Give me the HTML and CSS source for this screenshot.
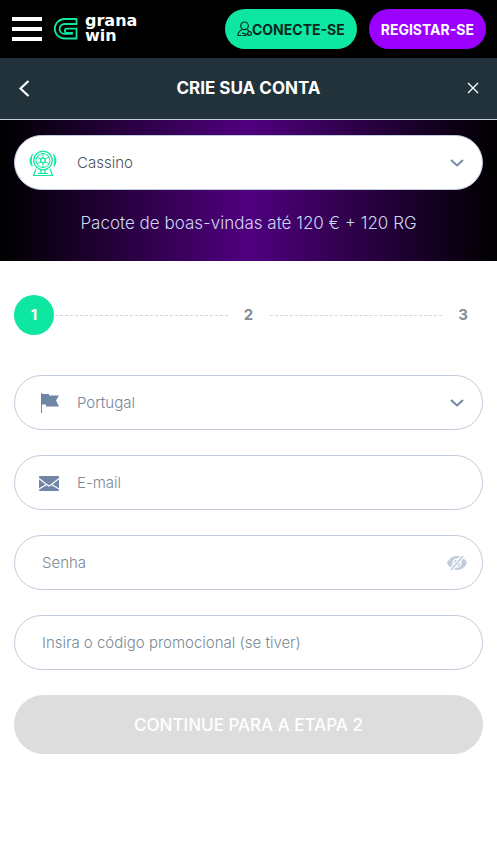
FILE: index.html
```html
<!DOCTYPE html>
<html lang="pt">
<head>
<meta charset="utf-8">
<meta name="viewport" content="width=device-width, initial-scale=1">
<title>Crie sua conta</title>
<link rel="stylesheet" href="styles.css">
</head>
<body>
<header class="topbar">
  <button class="menu" type="button" aria-label="Menu"><span></span><span></span><span></span></button>
  <a class="logo" href="#">
    <svg width="24" height="22" viewBox="0 0 24 22" fill="none" stroke="#0de7a2" stroke-width="1.800" aria-hidden="true">
      <path d="M10.500 1H22.500V6H10.500A4.900 4.900 0 0 0 10.500 15.800H18V15H13A2.200 2.200 0 0 1 13 10.600H22.500V20.500H10.500A9.750 9.750 0 0 1 10.500 1Z"/>
    </svg>
    <span class="logo-text">grana<br>win</span>
  </a>
  <nav class="actions">
    <button class="pill pill-login" type="button">
      <svg width="15" height="16" viewBox="0 0 15 16" fill="none" stroke="#06291f" stroke-width="1.200" aria-hidden="true">
        <circle cx="7.500" cy="4.800" r="3.800"/>
        <path d="M5 8.500C2 10 1 12 .8 14.500H4.500M10 8.500l2 1.500M5 12.500C7 10.500 9 15.500 11 12.500M5.500 14.500H9.500"/>
        <circle cx="12.500" cy="12.500" r="1.900"/>
      </svg>CONECTE-SE</button>
    <button class="pill pill-join" type="button">REGISTAR-SE</button>
  </nav>
</header>
<main>
  <div class="titlebar">
    <button class="icon-button" type="button" aria-label="Voltar">
      <svg width="20" height="20" viewBox="0 0 20 20" fill="none" stroke="#fff" stroke-width="2.200"><path d="M14.500 3L6.500 10.500L14.500 18"/></svg>
    </button>
    <h1>CRIE SUA CONTA</h1>
    <button class="icon-button" type="button" aria-label="Fechar">
      <svg width="20" height="20" viewBox="0 0 20 20" fill="none" stroke="#fff" stroke-width="1.300"><path d="M5 5L15 15M15 5L5 15"/></svg>
    </button>
  </div>
  <form>
    <section class="banner">
      <div class="field field-bonus">
        <svg class="lead lead-wheel" width="28" height="28" viewBox="0 0 28 28" fill="none" stroke="#0de7a2" aria-hidden="true">
          <circle cx="14" cy="11.500" r="9.300" stroke-width="1.300"/>
          <circle cx="14" cy="11.500" r="7"/>
          <circle cx="14" cy="11.500" r="2.400" stroke-width="1.300"/>
          <path d="M14 4.500V9M14 14V18.500M8 8L12 10.300M16 12.700L20 15M8 15L12 12.700M16 10.300L20 8"/>
          <path d="M3.500 5Q.8 11 3.200 17.500M1.500 8.500Q.8 12 1.700 15.500M24.500 5Q27.200 11 24.800 17.500M26.500 8.500Q27.200 12 26.300 15.500M7 20L4.500 26.500H23.500L21 20M12 21V24.500M16 21V24.500M9 24.500H19" stroke-width="1.200"/>
        </svg>
        <select aria-label="Bónus"><option>Cassino</option></select>
        <svg class="chevron" width="14" height="8" viewBox="0 0 14 8" fill="none" stroke="#7186a6" stroke-width="1.800" aria-hidden="true"><path d="M1 1L7 6.500L13 1"/></svg>
      </div>
      <p>Pacote de boas-vindas até 120 € + 120 RG</p>
    </section>
    <div class="content">
      <ol class="steps">
        <li class="step step-active">1</li>
        <li class="line" aria-hidden="true"></li>
        <li class="step">2</li>
        <li class="line" aria-hidden="true"></li>
        <li class="step">3</li>
      </ol>
      <div class="field">
        <svg class="lead" width="22" height="20" viewBox="0 0 22 20" fill="#7186a6" aria-hidden="true">
          <path d="M2 0H3V20H2Z"/><path d="M2.500 1H10V2.500H20L17 7.500L20 13.500H7V11.500H2.500Z"/>
        </svg>
        <select aria-label="País"><option>Portugal</option></select>
        <svg class="chevron" width="14" height="8" viewBox="0 0 14 8" fill="none" stroke="#7186a6" stroke-width="2" aria-hidden="true"><path d="M1 1L7 6.500L13 1"/></svg>
      </div>
      <div class="field">
        <svg class="lead" width="22" height="20" viewBox="0 0 22 20" aria-hidden="true">
          <rect y="3" width="20" height="15" rx="1" fill="#7186a6"/>
          <path d="M0 5.500L7.500 11.500L10 13L12.500 11.500L20 5.500M0 16L7.500 11.500M12.500 11.500L20 16" fill="none" stroke="#fff" stroke-width="1.200"/>
        </svg>
        <input type="email" placeholder="E-mail" aria-label="E-mail">
      </div>
      <div class="field field-plain">
        <input type="password" placeholder="Senha" aria-label="Senha">
        <button class="reveal" type="button" aria-label="Mostrar senha">
          <svg width="20" height="16" viewBox="0 0 20 16">
            <path d="M0 8C4-1.200 16-1.200 20 8C16 17.200 4 17.200 0 8Z" fill="#c1ccdc"/>
            <circle cx="10" cy="8" r="4" fill="none" stroke="#fff" stroke-width="1.500"/>
            <path d="M3.500 15.500L16.500 .5" stroke="#fff" stroke-width="4"/>
            <path d="M4 15L16 1" stroke="#c1ccdc" stroke-width="1.600"/>
          </svg>
        </button>
      </div>
      <div class="field field-plain">
        <input type="text" placeholder="Insira o código promocional (se tiver)" aria-label="Código promocional">
      </div>
      <button class="submit" type="submit" disabled>CONTINUE PARA A ETAPA 2</button>
    </div>
  </form>
</main>
</body>
</html>
```
FILE: styles.css
```css
* { box-sizing: border-box; }
body {
  margin: 0;
  background: #fff;
  font-family: Inter, "Liberation Sans", sans-serif;
  font-size: 15px;
}
button, input, select {
  margin: 0;
  padding: 0;
  border: 0;
  background: none;
  font: inherit;
  color: inherit;
}
.topbar {
  display: flex;
  align-items: center;
  height: 58px;
  padding: 0 11px 0 12px;
  background: #000;
}
.menu {
  display: flex;
  flex-direction: column;
  gap: 6px;
  width: 30px;
}
.menu span { height: 4px; background: #fff; }
.logo {
  display: flex;
  align-items: center;
  gap: 7px;
  margin-left: 12px;
  color: #fff;
  text-decoration: none;
}
.logo-text {
  font: bold 16px/15px "DejaVu Sans", sans-serif;
  padding-bottom: 2px;
}
.actions { display: flex; gap: 12px; margin-left: auto; }
.pill {
  display: flex;
  align-items: center;
  height: 40px;
  padding: 0 12px;
  border-radius: 20px;
  font-size: 14px;
  font-weight: 700;
  white-space: nowrap;
}
.pill-login { background: #0de7a2; color: #06291f; }
.pill-join { background: #9b00ff; color: #fff; }
.titlebar {
  display: flex;
  align-items: center;
  justify-content: space-between;
  height: 62px;
  padding: 0 14px 2px;
  background: #22323a;
  border-bottom: 1px solid #c1ccdc;
}
.titlebar h1 {
  margin: 0;
  color: #fff;
  font-size: 17px;
  line-height: 24px;
  font-weight: 700;
}
.icon-button { width: 20px; height: 20px; }
.icon-button svg { display: block; }
.banner {
  padding: 15px 14px 24px;
  background: linear-gradient(90deg, #000, #50007f 50%, #000);
}
.banner p {
  margin: 20px 0 0;
  color: #c9d8f5;
  font-size: 17px;
  line-height: 27px;
  font-weight: 300;
  text-align: center;
}
.field {
  display: flex;
  align-items: center;
  height: 55px;
  padding: 0 18px 0 24px;
  border: 1px solid #c1ccdc;
  border-radius: 28px;
  background: #fff;
  color: #74869c;
  font-weight: 300;
}
.field-bonus { padding-left: 14px; color: #4a5560; }
.field-plain { padding: 0 15px 0 27px; }
.lead { flex: none; margin-right: 16px; }
.lead-wheel { margin-right: 20px; }
.field select, .field input {
  flex: 1;
  min-width: 0;
  height: 100%;
  appearance: none;
  outline: 0;
}
.field input::placeholder { color: #7b8994; opacity: 1; }
.chevron { flex: none; }
.reveal { width: 20px; height: 16px; }
.reveal svg { display: block; }
.content {
  display: flex;
  flex-direction: column;
  gap: 25px;
  padding: 34px 14px;
}
.steps {
  display: flex;
  align-items: center;
  gap: 1px;
  margin: 0 0 15px;
  padding: 0;
  list-style: none;
}
.step {
  width: 40px;
  height: 40px;
  border-radius: 50%;
  color: #7f8f99;
  font-weight: 700;
  line-height: 40px;
  text-align: center;
}
.step-active { background: #0de7a2; color: #fff; }
.line { flex: 1; border-top: 1px dashed #d3d5e2; }
.submit {
  height: 59px;
  border-radius: 30px;
  background: #ddd;
  color: #fff;
  font-size: 17px;
  font-weight: 500;
}
```
